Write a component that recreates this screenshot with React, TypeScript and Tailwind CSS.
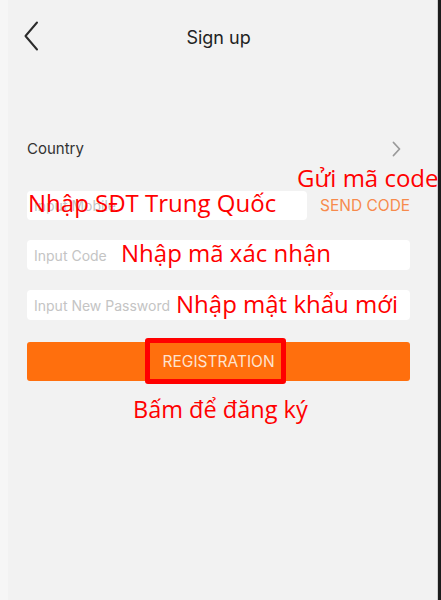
import React from "react";

const fields = [
  { id: "code", placeholder: "Input Code" },
  { id: "password", placeholder: "Input New Password" },
];

function BackIcon() {
  return (
    <svg width="16" height="30" viewBox="0 0 16 30" fill="none">
      <path
        d="M14 1.5 L2.5 15 L14 28.5"
        stroke="#2b2b2b"
        strokeWidth="2"
        strokeLinecap="round"
        strokeLinejoin="round"
      />
    </svg>
  );
}

function ChevronRight() {
  return (
    <svg width="9" height="16" viewBox="0 0 9 16" fill="none">
      <path
        d="M1.5 1.5 L7.5 8 L1.5 14.5"
        stroke="#9a9a9a"
        strokeWidth="1.8"
        strokeLinecap="round"
        strokeLinejoin="round"
      />
    </svg>
  );
}

// red hand-written notes laid over the screenshot
function Note({ className, children }: { className: string; children: React.ReactNode }) {
  return (
    <span
      className={`absolute whitespace-nowrap font-['Open_Sans',sans-serif] leading-none text-[#ff0000] ${className}`}
    >
      {children}
    </span>
  );
}

export default function App() {
  return (
    <div className="flex h-[600px] w-[441px] overflow-hidden font-['Inter','Liberation_Sans',sans-serif]">
      <div className="relative flex-1 bg-[linear-gradient(to_right,#f6f6f6_8px,#f2f2f2_8px)]">
        <header className="relative flex h-[75px] items-center justify-center">
          <span className="absolute left-[23px] top-[21px]">
            <BackIcon />
          </span>
          <h1 className="text-[18px] text-[#222]">Sign up</h1>
        </header>

        <div className="px-[27px]">
          <div className="mt-[54px] flex h-[40px] items-center justify-between pr-[9px]">
            <span className="text-[15px] text-[#333]">Country</span>
            <ChevronRight />
          </div>

          <div className="mt-[22px] flex items-center">
            <div className="flex h-[29px] w-[280px] shrink-0 items-center rounded-[4px] bg-white pl-[7px] text-[14px] text-[#c4c4c4]">
              Input Mobile
            </div>
            <span className="ml-[13px] whitespace-nowrap text-[15.5px] text-[#f78a4c]">SEND CODE</span>
          </div>

          {fields.map((f) => (
            <div
              key={f.id}
              className="mt-[20px] flex h-[30px] items-center rounded-[4px] bg-white pl-[7px] text-[14px] text-[#c4c4c4]"
            >
              {f.placeholder}
            </div>
          ))}

          <button className="mt-[22px] flex h-[39px] w-full items-center justify-center rounded-[3px] bg-[#ff6f0d] text-[15.5px] text-[#fde3cf]">
            REGISTRATION
          </button>
        </div>

        <Note className="left-[297px] top-[166px] text-[24px]">Gửi mã code</Note>
        <Note className="left-[28px] top-[191px] text-[24px]">Nhập SĐT Trung Quốc</Note>
        <Note className="left-[121px] top-[241px] text-[24px]">Nhập mã xác nhận</Note>
        <Note className="left-[176px] top-[292px] text-[24px]">Nhập mật khẩu mới</Note>
        <Note className="left-[133px] top-[398px] text-[23.5px]">Bấm để đăng ký</Note>

        <div className="absolute left-[145px] top-[338px] h-[46px] w-[141px] rounded-[3px] border-[5px] border-[#ff0000]" />
      </div>
      <div className="w-px bg-[#cfcfcf]" />
      <div className="w-[3px] bg-[#1c1c1c]" />
    </div>
  );
}
